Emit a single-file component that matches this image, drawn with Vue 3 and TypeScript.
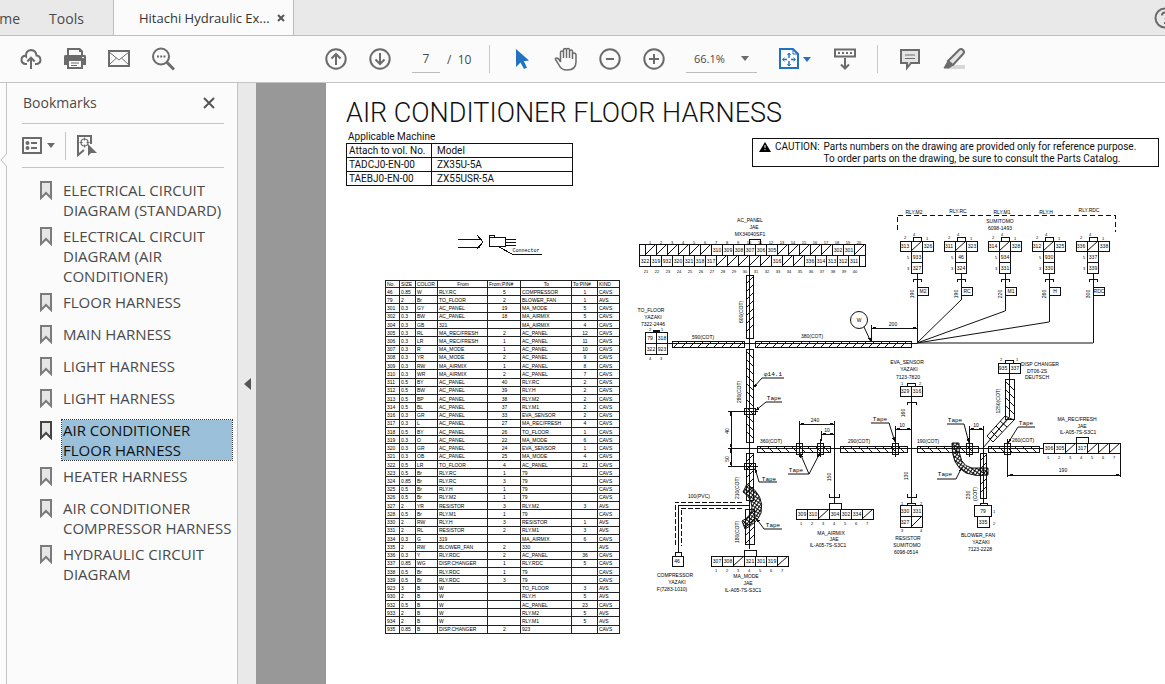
<script setup lang="ts">
import { ref } from 'vue'

interface Bookmark { label: string; selected?: boolean }
interface Tube { x: number; y: number; w: number; h: number; back?: boolean }
interface Label { t: string; x: number; y: number; kind?: string; turn?: boolean }
interface Strip { x: number; y: number; cells: string[] }
interface Relay {
  name: string; nx: number; ny: number; x: number; left: string; right: string
  top: string; bottom: string; length: string; tag: string; bend: number
}

const page = ref('7')
const zoom = ref('66.1%')

const bookmarks: Bookmark[] = [
  { label: 'ELECTRICAL CIRCUIT DIAGRAM (STANDARD)' },
  { label: 'ELECTRICAL CIRCUIT DIAGRAM (AIR CONDITIONER)' },
  { label: 'FLOOR HARNESS' },
  { label: 'MAIN HARNESS' },
  { label: 'LIGHT HARNESS' },
  { label: 'LIGHT HARNESS' },
  { label: 'AIR CONDITIONER FLOOR HARNESS', selected: true },
  { label: 'HEATER HARNESS' },
  { label: 'AIR CONDITIONER COMPRESSOR HARNESS' },
  { label: 'HYDRAULIC CIRCUIT DIAGRAM' },
]

const wireHead = ['No.', 'SIZE', 'COLOR', 'From', 'From:PIN#', 'To', 'To:PIN#', 'KIND']
const wires: string[][] = `46|0.85|W|RLY.RC|5|COMPRESSOR|1|CAVS
79|2|Br|TO_FLOOR|2|BLOWER_FAN|1|AVS
301|0.3|GY|AC_PANEL|19|MA_MODE|5|CAVS
302|0.3|BW|AC_PANEL|18|MA_AIRMIX|5|CAVS
304|0.3|GB|321||MA_AIRMIX|4|CAVS
305|0.3|RL|MA_REC/FRESH|2|AC_PANEL|12|CAVS
306|0.3|LR|MA_REC/FRESH|1|AC_PANEL|11|CAVS
307|0.3|R|MA_MODE|1|AC_PANEL|10|CAVS
308|0.3|YR|MA_MODE|2|AC_PANEL|9|CAVS
309|0.3|RW|MA_AIRMIX|1|AC_PANEL|8|CAVS
310|0.3|WR|MA_AIRMIX|2|AC_PANEL|7|CAVS
311|0.5|BY|AC_PANEL|40|RLY.RC|2|CAVS
312|0.5|BW|AC_PANEL|39|RLY.H|2|CAVS
313|0.5|BP|AC_PANEL|38|RLY.M2|2|CAVS
314|0.5|BL|AC_PANEL|37|RLY.M1|2|CAVS
316|0.3|GR|AC_PANEL|33|EVA_SENSOR|2|CAVS
317|0.3|L|AC_PANEL|27|MA_REC/FRESH|4|CAVS
318|0.5|BY|AC_PANEL|26|TO_FLOOR|1|CAVS
319|0.3|O|AC_PANEL|22|MA_MODE|6|CAVS
320|0.3|GR|AC_PANEL|24|EVA_SENSOR|1|CAVS
321|0.3|OB|AC_PANEL|25|MA_MODE|4|CAVS
322|0.5|LR|TO_FLOOR|4|AC_PANEL|21|CAVS
323|0.5|Br|RLY.RC|1|79||CAVS
324|0.85|Br|RLY.RC|3|79||CAVS
325|0.5|Br|RLY.H|1|79||CAVS
326|0.5|Br|RLY.M2|1|79||CAVS
327|2|YR|RESISTOR|3|RLY.M2|3|AVS
328|0.5|Br|RLY.M1|1|79||CAVS
330|2|RW|RLY.H|3|RESISTOR|1|AVS
331|2|RL|RESISTOR|2|RLY.M1|3|AVS
334|0.3|G|319||MA_AIRMIX|6|CAVS
335|2|RW|BLOWER_FAN|2|330||AVS
336|0.3|Y|RLY.RDC|2|AC_PANEL|36|CAVS
337|0.85|WG|DISP.CHANGER|1|RLY.RDC|5|CAVS
338|0.5|Br|RLY.RDC|1|79||CAVS
339|0.5|Br|RLY.RDC|3|79||CAVS
923|3|B|W||TO_FLOOR|3|AVS
930|2|B|W||RLY.H|5|AVS
932|0.5|B|W||AC_PANEL|23|CAVS
933|2|B|W||RLY.M2|5|AVS
934|2|B|W||RLY.M1|5|AVS
935|0.85|B|DISP.CHANGER|2|923||CAVS`.split('\n').map((row) => row.split('|'))

const panelTop = '/ / / / / / 310 309 308 307 306 305 / / / / / 302 301 /'.split(' ')
const panelBottom = '322 319 932 320 321 318 317 / / / / / 316 / / 336 314 313 312 311'.split(' ')

const relays: Relay[] = [
  { name: 'RLY.M2', nx: 914, ny: 212, x: 917, left: '313', right: '326', top: '933', bottom: '327', length: '190', tag: 'M2', bend: 343 },
  { name: 'RLY.RC', nx: 958, ny: 211, x: 961, left: '311', right: '323', top: '46', bottom: '324', length: '190', tag: 'RC', bend: 300 },
  { name: 'RLY.M1', nx: 1002, ny: 212, x: 1005, left: '314', right: '328', top: '934', bottom: '331', length: '220', tag: 'M1', bend: 311 },
  { name: 'RLY.H', nx: 1046, ny: 212, x: 1049, left: '312', right: '325', top: '930', bottom: '330', length: '260', tag: 'H', bend: 322 },
  { name: 'RLY.RDC', nx: 1089, ny: 210, x: 1093, left: '336', right: '338', top: '337', bottom: '339', length: '300', tag: 'RDC', bend: 343 },
]

const strips: Strip[] = [
  { x: 1043, y: 443, cells: ['306', '305', '/', '317', '/', '/', '/'] },
  { x: 796, y: 509, cells: ['309', '310', '/', '304', '302', '334', '/'] },
  { x: 711, y: 556, cells: ['307', '308', '/', '321', '301', '319', '/'] },
]

const tubes: Tube[] = [
  { x: 746, y: 275, w: 7, h: 63 },
  { x: 672, y: 341, w: 72, h: 6 },
  { x: 755, y: 341, w: 156, h: 6 },
  { x: 746, y: 349, w: 7, h: 93, back: true },
  { x: 746, y: 453, w: 7, h: 47 },
  { x: 745, y: 509, w: 9, h: 35 },
  { x: 757, y: 446, w: 73, h: 6, back: true },
  { x: 840, y: 446, w: 67, h: 6, back: true },
  { x: 917, y: 446, w: 61, h: 6, back: true },
  { x: 988, y: 446, w: 51, h: 6, back: true },
  { x: 980, y: 453, w: 6, h: 45 },
  { x: 1005, y: 379, w: 9, h: 40, back: true },
]

function hatch(t: Tube): string {
  const upright = t.h > t.w
  const d = Math.min(t.w, t.h)
  const span = Math.max(t.w, t.h)
  let path = ''
  for (let s = 2; s + d <= span; s += 8) {
    const x = upright ? t.x : t.x + s
    const y = upright ? t.y + s : t.y
    path += t.back ? `M${x} ${y}l${d} ${d}` : `M${x} ${y + d}l${d} ${-d}`
  }
  return path
}

const clampsAcross = [799, 820, 895, 969, 1007]
const clampsUpright = [411, 466]

const leaders = [
  'M784 378H762L753 388', 'M782 402H766L755 411', 'M777 482H759L755 468', 'M782 529H764L756 518',
  'M788 474H809L800 453', 'M809 474L820 453', 'M871 423H889L895 442', 'M947 424H964L969 443',
  'M1035 427H1018L1008 443', 'M937 479H956L962 467', 'M864 327L871 342',
]

const dims = [
  'M731 411V448', 'M731 448V466', 'M799 424H834', 'M821 434H834', 'M895 429H911',
  'M969 429H983', 'M1008 475H1120', 'M871 328H917',
]

const labels: Label[] = [
  { t: 'AC_PANEL', x: 750, y: 220 }, { t: 'JAE', x: 754, y: 227 }, { t: 'MX34040SF1', x: 750, y: 234 },
  { t: 'SUMITOMO', x: 1000, y: 221 }, { t: '6098-1493', x: 1000, y: 228 },
  { t: 'TO_FLOOR', x: 651, y: 310 }, { t: 'YAZAKI', x: 653, y: 317 }, { t: '7322-2446', x: 653, y: 324 },
  { t: 'EVA_SENSOR', x: 907, y: 362 }, { t: 'YAZAKI', x: 909, y: 369 }, { t: '7123-7820', x: 908, y: 377 },
  { t: 'DISP CHANGER', x: 1040, y: 364 }, { t: 'DT06-2S', x: 1037, y: 371 }, { t: 'DEUTSCH', x: 1037, y: 377 },
  { t: 'MA_REC/FRESH', x: 1077, y: 419 }, { t: 'JAE', x: 1082, y: 426 }, { t: 'IL-A05-7S-S3C1', x: 1078, y: 432 },
  { t: 'MA_AIRMIX', x: 831, y: 533 }, { t: 'JAE', x: 834, y: 539 }, { t: 'IL-A05-7S-S3C1', x: 828, y: 545 },
  { t: 'MA_MODE', x: 746, y: 576 }, { t: 'JAE', x: 748, y: 583 }, { t: 'IL-A05-7S-S3C1', x: 743, y: 590 },
  { t: 'COMPRESSOR', x: 675, y: 575 }, { t: 'YAZAKI', x: 677, y: 582 }, { t: 'F(7283-1010)', x: 672, y: 589 },
  { t: 'RESISTOR', x: 908, y: 538 }, { t: 'SUMITOMO', x: 907, y: 545 }, { t: '6098-0514', x: 906, y: 552 },
  { t: 'BLOWER_FAN', x: 978, y: 535 }, { t: 'YAZAKI', x: 981, y: 542 }, { t: '7123-2228', x: 980, y: 549 },
  { t: '590(COT)', x: 703, y: 337 }, { t: '380(COT)', x: 812, y: 336 }, { t: '100(PVC)', x: 699, y: 496 },
  { t: '360(COT)', x: 771, y: 441 }, { t: '290(COT)', x: 859, y: 441 }, { t: '190(COT)', x: 928, y: 441 }, { t: '260(COT)', x: 1023, y: 440 },
  { t: '600(COT)', x: 741, y: 312, turn: true }, { t: '280(COT)', x: 739, y: 392, turn: true },
  { t: '210(COT)', x: 737, y: 488, turn: true }, { t: '180(COT)', x: 737, y: 532, turn: true },
  { t: '1250(COT)', x: 998, y: 401, turn: true }, { t: '230', x: 968, y: 495, turn: true }, { t: '(COT)', x: 975, y: 494, turn: true },
  { t: '150', x: 829, y: 477, turn: true }, { t: '160', x: 903, y: 413, turn: true }, { t: '130', x: 906, y: 476, turn: true },
  { t: '40', x: 727, y: 431, turn: true }, { t: '50', x: 727, y: 459, turn: true },
  { t: '240', x: 815, y: 420 }, { t: '10', x: 827, y: 430 }, { t: '10', x: 902, y: 425 },
  { t: '10', x: 976, y: 425 }, { t: '190', x: 1063, y: 470 }, { t: '200', x: 893, y: 324 },
  { t: 'W', x: 859, y: 320 },
  { t: 'φ14.1', x: 773, y: 374, kind: 'tape' },
  { t: 'Tape', x: 774, y: 398, kind: 'tape' }, { t: 'Tape', x: 769, y: 479, kind: 'tape' }, { t: 'Tape', x: 773, y: 525, kind: 'tape' },
  { t: 'Tape', x: 796, y: 470, kind: 'tape' }, { t: 'Tape', x: 880, y: 419, kind: 'tape' }, { t: 'Tape', x: 955, y: 420, kind: 'tape' },
  { t: 'Tape', x: 1026, y: 423, kind: 'tape' }, { t: 'Tape', x: 945, y: 474, kind: 'tape' },
  { t: '79', x: 650, y: 338 }, { t: '318', x: 662, y: 338 }, { t: '322', x: 651, y: 349 }, { t: '923', x: 662, y: 349 },
  { t: '329', x: 905, y: 391 }, { t: '316', x: 917, y: 391 },
  { t: '935', x: 1003, y: 368 }, { t: '337', x: 1015, y: 368 },
  { t: '330', x: 905, y: 511 }, { t: '331', x: 917, y: 511 }, { t: '327', x: 905, y: 522 },
  { t: '79', x: 983, y: 511 }, { t: '335', x: 983, y: 522 }, { t: '46', x: 677, y: 561 },
  { t: '2', x: 650, y: 329, kind: 'pin' }, { t: '1', x: 662, y: 329, kind: 'pin' }, { t: '4', x: 650, y: 358, kind: 'pin' }, { t: '3', x: 661, y: 358, kind: 'pin' },
  { t: '1', x: 902, y: 383, kind: 'pin' }, { t: '2', x: 920, y: 383, kind: 'pin' }, { t: '2', x: 1001, y: 359, kind: 'pin' }, { t: '1', x: 1017, y: 359, kind: 'pin' },
  { t: '1', x: 902, y: 503, kind: 'pin' }, { t: '2', x: 921, y: 503, kind: 'pin' }, { t: '3', x: 902, y: 530, kind: 'pin' }, { t: '4', x: 921, y: 530, kind: 'pin' },
  { t: '1', x: 994, y: 511, kind: 'pin' }, { t: '2', x: 994, y: 523, kind: 'pin' },
]
</script>

<template>
  <div class="viewer">
    <nav class="tabs" aria-label="Documents">
      <button class="tab home">Home</button>
      <button class="tab tools">Tools</button>
      <div class="tab document">
        <span>Hitachi Hydraulic Ex...</span>
        <button class="close-tab" aria-label="Close tab">
          <svg width="8" height="8" viewBox="0 0 8 8"><path d="M1 1l6 6M7 1L1 7" stroke="#555" stroke-width="2" /></svg>
        </button>
      </div>
      <button class="help" aria-label="Help">
        <svg width="22" height="22" viewBox="0 0 22 22" class="line-icon"><circle cx="11" cy="11" r="9.5" /><path d="M8 8.5q0-3 3-3t3 3q0 1.500-3 4M11 15v2" /></svg>
      </button>
    </nav>

    <header class="toolbar">
      <button class="tool" aria-label="Upload">
        <svg width="24" height="24" viewBox="0 0 24 24" class="line-icon"><path d="M8 17H6.500A4.200 4.200 0 0 1 5.500 8.800Q6.500 9 7 9.400Q6.500 3.500 12 3q5 .3 5.500 5.500A4.300 4.300 0 0 1 18 17h-2" /><path d="M12 22V11M8.300 14.500L12 10.700l3.700 3.800" /></svg>
      </button>
      <button class="tool" aria-label="Print">
        <svg width="24" height="24" viewBox="0 0 24 24"><path d="M4 1h13l3 3v5H4z" fill="#6b6b6b" /><path d="M6 3h10v2h2v4H6z" fill="#fbfbfb" /><path d="M2 8h20q1 0 1 2v8h-3v4H4v-4H1v-8q0-2 1-2z" fill="#6b6b6b" /><path d="M6 14h12v6H6z" fill="#fbfbfb" /><path d="M8 16h8M8 18.500h6" stroke="#6b6b6b" /><path d="M19 10.500h2" stroke="#fbfbfb" /></svg>
      </button>
      <button class="tool" aria-label="Send by email">
        <svg width="24" height="24" viewBox="0 0 24 24" class="line-icon"><path d="M2 4h20v15H2z" /><path d="M2 5l10 8 10-8M2 18l7.500-7M22 18l-7.500-7" stroke-width="1" /></svg>
      </button>
      <button class="tool" aria-label="Find text">
        <svg width="24" height="24" viewBox="0 0 24 24" class="line-icon"><circle cx="10" cy="9.500" r="8" /><path d="M16 15.500l7 7" stroke-width="3" /><path d="M6 9.500h2M9.200 9.500h2M12.500 9.500h2" /></svg>
      </button>
      <button class="tool previous" aria-label="Previous page">
        <svg width="24" height="24" viewBox="0 0 24 24" class="line-icon"><circle cx="12" cy="12" r="9.700" /><path d="M12 18V7M7.500 11.500L12 7l4.500 4.500" /></svg>
      </button>
      <button class="tool" aria-label="Next page">
        <svg width="24" height="24" viewBox="0 0 24 24" class="line-icon"><circle cx="12" cy="12" r="9.700" /><path d="M12 6v11M7.500 12.500L12 17l4.500-4.500" /></svg>
      </button>
      <input v-model="page" class="page-number" type="text" aria-label="Page number">
      <span class="page-total">/&nbsp; 10</span>
      <span class="divider"></span>
      <button class="tool" aria-label="Select">
        <svg width="24" height="24" viewBox="0 0 24 24"><path d="M6 2v18l4.500-4.500 3.500 6.500 3-1.500-3.200-6.300L19 13.500z" fill="#2272c3" /></svg>
      </button>
      <button class="tool" aria-label="Hand">
        <svg width="24" height="24" viewBox="0 0 24 24" class="line-icon thin"><path d="M6.500 15V5.500q0-1.500 1.500-1.500t1.500 1.500V11V3q0-1.500 1.500-1.500T12.500 3v8V3q0-1.500 1.500-1.500T15.500 3v8V4.500q0-1.500 1.500-1.500t1.500 1.500V12V7.500q0-1.500 1.500-1.500T22 7.500V15q0 8-9 8Q7 23 5 18L1.500 12.500Q1 11 2.500 11q2-.2 4 4z" /></svg>
      </button>
      <button class="tool" aria-label="Zoom out">
        <svg width="24" height="24" viewBox="0 0 24 24" class="line-icon"><circle cx="12" cy="12" r="9.700" /><path d="M8 12h8" /></svg>
      </button>
      <button class="tool" aria-label="Zoom in">
        <svg width="24" height="24" viewBox="0 0 24 24" class="line-icon"><circle cx="12" cy="12" r="9.700" /><path d="M7 12h10M12 7v10" /></svg>
      </button>
      <label class="zoom">
        <select v-model="zoom" aria-label="Zoom level">
          <option>66.1%</option>
          <option>100%</option>
        </select>
        <svg width="8" height="5" viewBox="0 0 8 5"><path d="M0 0h8L4 5z" fill="#6b6b6b" /></svg>
      </label>
      <button class="tool fit" aria-label="Fit page">
        <svg width="22" height="24" viewBox="0 0 22 24" fill="none" stroke="#2272c3" stroke-width="2"><path d="M2 2h13l5 5v14H2z" /><path d="M15 2v5h5" stroke-width="1" /><path d="M11 6v5M11 14v5M5 12.500h4M13 12.500h4" stroke-width="1.500" /><path d="M9.300 8L11 6l1.700 2M9.300 17l1.700 2 1.700-2M6.500 10.800l-2 1.700 2 1.700M15.500 10.800l2 1.700-2 1.700" stroke-width="1" /></svg>
        <svg width="8" height="5" viewBox="0 0 8 5"><path d="M0 0h8L4 5z" fill="#2272c3" /></svg>
      </button>
      <button class="tool scroll" aria-label="Page scrolling">
        <svg width="24" height="24" viewBox="0 0 24 24" class="line-icon"><path d="M2 2.500h20v7H2z" /><path d="M5 6h2M9 6h2M13 6h2M17 6h2M12 11v10M8 17.500l4 4 4-4" /></svg>
      </button>
      <span class="divider second"></span>
      <button class="tool" aria-label="Comment">
        <svg width="24" height="24" viewBox="0 0 24 24" class="line-icon"><path d="M3 3h18v13h-8l-4 5v-5H3z" fill="#e4e4e4" /><path d="M7 8h10M7 11.500h10" stroke-width="1" /></svg>
      </button>
      <button class="tool" aria-label="Highlight">
        <svg width="24" height="24" viewBox="0 0 24 24" class="line-icon"><path d="M8 18h15v4H5z" fill="#d8d8d8" stroke="none" /><path d="M6 14L17 3q2-2 4 0t0 4L11 18z" fill="#e4e4e4" /><path d="M6 14l5 4-4 3H2z" fill="#6b6b6b" stroke-width="1" /></svg>
      </button>
    </header>

    <main class="workspace">
      <div class="rail">
        <svg width="7" height="14" viewBox="0 0 7 14"><path d="M7 0L1 7l6 7" fill="#fbfbfb" stroke="#bbb" /></svg>
      </div>
      <aside class="panel">
        <div class="panel-head">
          <h2>Bookmarks</h2>
          <button aria-label="Close bookmarks"><svg width="14" height="14" viewBox="0 0 14 14"><path d="M2 2l10 10M12 2L2 12" stroke="#555" stroke-width="2" /></svg></button>
        </div>
        <div class="panel-tools">
          <button class="options" aria-label="Options">
            <svg width="20" height="18" viewBox="0 0 20 18" class="line-icon"><path d="M1 1h18v15H1z" /><path d="M9 6h6M9 11h6" /><circle cx="5.500" cy="6" r="1" /><circle cx="5.500" cy="11" r="1" /></svg>
            <svg width="8" height="5" viewBox="0 0 8 5"><path d="M0 0h8L4 5z" fill="#6b6b6b" /></svg>
          </button>
          <button class="locate" aria-label="Find current bookmark">
            <svg width="22" height="24" viewBox="0 0 22 24" class="line-icon"><path d="M15 10V2H2v19l6-5" /><circle cx="8.500" cy="8.500" r="3.500" stroke-width="1.200" /><path d="M8.500 3.500v3M8.500 10.500v3M3.500 8.500h3M10.500 8.500h3" stroke-width="1" /><path d="M12 10v12l3-3h6z" fill="#6b6b6b" stroke="none" /></svg>
          </button>
        </div>
        <ul class="bookmarks">
          <li v-for="(b, i) in bookmarks" :key="i">
            <svg width="12" height="20" viewBox="0 0 12 20"><path d="M1 2h10v16l-5-5-5 5z" fill="#e6e6e6" :stroke="b.selected ? '#444' : '#7b7b7b'" stroke-width="2" /></svg>
            <a href="#" :class="{ selected: b.selected }">{{ b.label }}</a>
          </li>
        </ul>
      </aside>
      <button class="splitter" aria-label="Collapse panel">
        <svg width="7" height="12" viewBox="0 0 7 12"><path d="M7 0v12L0 6z" fill="#555" /></svg>
      </button>

      <article class="sheet">
        <h1>AIR CONDITIONER FLOOR HARNESS</h1>
        <div class="sheet-head">
          <table class="machines">
            <caption>Applicable Machine</caption>
            <thead><tr><th>Attach to vol. No.</th><th>Model</th></tr></thead>
            <tbody>
              <tr><td>TADCJ0-EN-00</td><td>ZX35U-5A</td></tr>
              <tr><td>TAEBJ0-EN-00</td><td>ZX55USR-5A</td></tr>
            </tbody>
          </table>
          <div class="caution">
            <svg width="12" height="10" viewBox="0 0 12 10"><path d="M6 0l6 10H0z" /><path d="M6 3v3M6 7v1" stroke="#fff" /></svg>
            <strong>CAUTION:</strong>
            <p>Parts numbers on the drawing are provided only for reference purpose.<br>To order parts on the drawing, be sure to consult the Parts Catalog.</p>
          </div>
        </div>

        <div class="sheet-body">
          <div class="wire-column">
            <svg class="drawing legend" viewBox="385 195 234 85">
              <path d="M458 239h22M458 247h22M477 235l6 7-6 7" />
              <path d="M489 246v-11h5v2h11v9zM489 237h5M505 239h11M505 242h11M505 245h11" />
              <path d="M499 247l13 7h30" />
              <text x="526" y="251" class="tape">Connector</text>
            </svg>
            <table class="wires">
              <colgroup><col v-for="n in 8" :key="n" :class="'c' + n"></colgroup>
              <thead><tr><th v-for="h in wireHead" :key="h">{{ h }}</th></tr></thead>
              <tbody>
                <tr v-for="row in wires" :key="row[0]"><td v-for="(cell, i) in row" :key="i">{{ cell }}</td></tr>
              </tbody>
            </table>
          </div>

          <svg class="drawing harness" viewBox="630 195 535 410">
            <defs>
              <marker id="tip" viewBox="0 0 6 4" refX="6" refY="2" markerWidth="5" markerHeight="3" orient="auto-start-reverse"><path d="M0 0l6 2-6 2z" fill="#111" stroke="none" /></marker>
              <pattern id="mesh" width="3" height="3" patternUnits="userSpaceOnUse" patternTransform="rotate(35)"><path d="M0 0h3M0 0v3" stroke="#111" stroke-width="1" /></pattern>
            </defs>

            <!-- wires -->
            <path d="M667 343H917M749 266V549M728 448H1043M834 421V503M911 396V503M983 426V503M1009 373V417" />
            <path class="smooth" d="M1009 417L983 448" />
            <path d="M749 505H678V552" />
            <path d="M742 502H675V546M742 508H681V546" stroke-dasharray="5 2" />
            <path d="M897 230V215H1115V232" stroke-dasharray="5 3" />

            <!-- protective tubes -->
            <g v-for="(t, i) in tubes" :key="'t' + i">
              <rect :x="t.x" :y="t.y" :width="t.w" :height="t.h" />
              <path class="smooth" :d="hatch(t)" />
            </g>
            <path class="smooth" d="M1005 416L1014 420L993 442L987 436zM1000 421l7 6M996 426l6 6M991 431l6 6M1009 418L990 439" />
            <path class="smooth" d="M747 484Q765 495 761 513Q757 523 745 529L742 521Q751 517 752 507Q751 497 743 492z" fill="url(#mesh)" />
            <path class="smooth" d="M952 443H959Q958 466 972 468H988V475Q976 477 966 473Q951 465 952 443z" fill="url(#mesh)" />
            <g v-for="x in clampsAcross" :key="'a' + x">
              <rect :x="x - 3" y="443" width="6" height="11" /><path :d="`M${x} 439v18`" />
            </g>
            <g v-for="y in clampsUpright" :key="'u' + y">
              <rect x="744" :y="y - 3" width="11" height="6" /><path :d="`M728 ${y}h30`" />
            </g>

            <!-- dimensions -->
            <path v-for="d in dims" :key="d" :d="d" marker-start="url(#tip)" marker-end="url(#tip)" />
            <path d="M799 421v20M821 431v10M895 426v14M969 426v14M1007 456v21M1120 454v23M871 325v17" />
            <path v-for="d in leaders" :key="d" class="smooth" :d="d" marker-end="url(#tip)" />
            <circle class="smooth" cx="859" cy="320" r="8.500" />

            <!-- AC panel connector -->
            <path d="M639 244H865V266H639zM639 255H865M645 244v11M859 255v11M749 244v-5h11v5" />
            <g v-for="(c, i) in panelTop" :key="'p' + i">
              <path :d="`M${645 + i * 11} 244v11`" />
              <path v-if="c === '/'" class="smooth" :d="`M${645 + i * 11} 255l11 -11`" />
              <text v-else :x="651 + i * 11" y="250">{{ c }}</text>
              <text class="pin" :x="650 + i * 11" y="242">{{ i + 1 }}</text>
            </g>
            <g v-for="(c, i) in panelBottom" :key="'q' + i">
              <path :d="`M${639 + i * 11} 255v11`" />
              <path v-if="c === '/'" class="smooth" :d="`M${639 + i * 11} 266l11 -11`" />
              <text v-else :x="645 + i * 11" y="261">{{ c }}</text>
              <text class="pin" :x="646 + i * 11" y="271">{{ i + 21 }}</text>
            </g>

            <!-- relays -->
            <g v-for="r in relays" :key="r.name">
              <text :x="r.nx" :y="r.ny">{{ r.name }}</text>
              <rect :x="r.x - 17" y="241" width="33" height="10" />
              <rect :x="r.x - 6" y="241" width="11" height="32" />
              <path :d="`M${r.x - 6} 251h11M${r.x - 6} 262h11M${r.x - 4} 241v-4h8v4M${r.x - 4} 282v-3h8v3`" />
              <path class="smooth" :d="`M${r.x - 6} 251l11 -10`" />
              <text :x="r.x - 12" y="246">{{ r.left }}</text>
              <text :x="r.x + 11" y="246">{{ r.right }}</text>
              <text :x="r.x" y="257">{{ r.top }}</text>
              <text :x="r.x" y="268">{{ r.bottom }}</text>
              <text class="pin" :x="r.x - 12" y="237">2</text>
              <text class="pin" :x="r.x - 3" y="234">4</text>
              <text class="pin" :x="r.x + 10" y="238">1</text>
              <text class="pin" :x="r.x - 9" y="257">5</text>
              <text class="pin" :x="r.x - 9" y="268">3</text>
              <path :d="`M${r.x} 273V${r.bend}`" />
              <path class="smooth" :d="`M${r.x} ${r.bend}L917 343`" />
              <rect :x="r.x" y="287" width="11" height="8" />
              <text :x="r.x + 6" y="291">{{ r.tag }}</text>
              <text :transform="`translate(${r.x - 5} 294) rotate(-90)`">{{ r.length }}</text>
            </g>

            <!-- seven-way connectors -->
            <g v-for="s in strips" :key="'s' + s.x">
              <rect :x="s.x" :y="s.y" width="77" height="10" />
              <path :d="`M${s.x + 33} ${s.y}v-6h12v6`" />
              <g v-for="(c, i) in s.cells" :key="i">
                <path :d="`M${s.x + i * 11} ${s.y}v10`" />
                <path v-if="c === '/'" class="smooth" :d="`M${s.x + i * 11} ${s.y + 10}l11 -10`" />
                <text v-else :x="s.x + 6 + i * 11" :y="s.y + 5">{{ c }}</text>
                <text class="pin" :x="s.x + 5 + i * 11" :y="s.y + 14">{{ i + 1 }}</text>
              </g>
            </g>

            <!-- small connectors -->
            <path d="M645 332h22v22h-22zM645 343h22M656 332v22" />
            <rect x="653" y="330" width="6" height="2" fill="#111" />
            <path d="M900 386h22v10h-22zM911 386v10M907 386v-3h8v3M907 405v-3h9v3" />
            <path d="M998 363h22v10h-22zM1009 363v10M1005 363v-3h8v3" />
            <path d="M900 505h22v22h-22zM900 516h22M911 505v22M907 505v-2h8v2M907 494v3h9v-3M911 527l11-11M829 494v3h10v-3" />
            <path d="M974 505h17v11h-17zM977 516h12v11h-12zM980 505v-2h7v2" />
            <path d="M672 556h11v10h-11zM675 556v-4h6v4" />

            <g v-for="(l, i) in labels" :key="'l' + i">
              <text v-if="l.turn" :class="l.kind" :transform="`translate(${l.x} ${l.y}) rotate(-90)`">{{ l.t }}</text>
              <text v-else :class="l.kind" :x="l.x" :y="l.y">{{ l.t }}</text>
            </g>
          </svg>
        </div>
      </article>
    </main>
  </div>
</template>

<style>
body { overflow: hidden; }
</style>

<style scoped>
* { box-sizing: border-box; }
.viewer { height: 100vh; display: flex; flex-direction: column; font: 14px "Open Sans", "Noto Sans", sans-serif; color: #4a4a4a; background: #fbfbfb; }
button { border: 0; padding: 0; background: none; font: inherit; color: inherit; display: flex; align-items: center; justify-content: center; flex: none; }
.line-icon { fill: none; stroke: #6b6b6b; stroke-width: 2; }
.line-icon.thin { stroke-width: 1.5; }

.tabs { height: 36px; flex: none; display: flex; background: #e9e9e9; border-bottom: 1px solid #bdbdbd; overflow: hidden; }
.tab { height: 36px; }
.home { width: 40px; margin-left: -20px; justify-content: flex-end; }
.tools { width: 93px; }
.document { display: flex; align-items: center; justify-content: space-between; width: 181px; padding: 0 8px 0 25px; background: #fbfbfb; border: solid #bdbdbd; border-width: 0 1px; font-size: 13px; color: #333; white-space: nowrap; }
.help { margin: 0 -11px 0 auto; }

.toolbar { height: 47px; flex: none; display: flex; align-items: center; padding-left: 9px; border-bottom: 1px solid #c4c4c4; background: #fbfbfb; font-size: 12px; }
.tool { width: 44px; height: 44px; }
.previous { margin-left: 129px; }
.page-number { width: 28px; height: 28px; margin-left: 10px; padding: 0; border: 0; border-bottom: 1px solid #bbb; background: none; font: inherit; color: inherit; text-align: center; }
.page-total { width: 42px; margin-left: 7px; }
.divider { width: 1px; height: 28px; margin-right: 10px; background: #c8c8c8; }
.divider.second { margin-left: 10px; }
.zoom { width: 71px; height: 28px; margin-left: 10px; display: flex; align-items: center; padding-right: 8px; border-bottom: 1px solid #bbb; font-size: 11px; }
.zoom select { flex: 1; min-width: 0; appearance: none; border: 0; padding: 0 0 0 8px; background: none; font: inherit; color: inherit; }
.fit { width: 36px; margin-left: 19px; gap: 3px; }
.scroll { margin-left: 11px; }

.workspace { flex: 1; min-height: 0; display: flex; background: #989898; }
.rail { width: 7px; flex: none; padding-top: 70px; border-right: 1px solid #c4c4c4; background: #fbfbfb; }
.rail svg { display: block; }
.panel { width: 231px; flex: none; padding-right: 5px; border-right: 1px solid #c4c4c4; background: #fbfbfb; }
.panel-head { height: 41px; margin: 0 8px 0 15px; padding: 0 8px 0 1px; display: flex; align-items: center; justify-content: space-between; border-bottom: 1px solid #c4c4c4; }
.panel-head h2 { margin: 0; padding-bottom: 2px; font-size: 14px; font-weight: 400; }
.panel-tools { height: 44px; margin: 0 8px 0 15px; display: flex; align-items: center; border-bottom: 1px solid #c4c4c4; }
.options { width: 44px; height: 28px; gap: 5px; border-right: 1px solid #c4c4c4; padding-right: 10px; }
.locate { margin-left: 10px; }
.bookmarks { list-style: none; margin: 0; padding: 12px 0 0 33px; display: flex; flex-direction: column; gap: 6px; font-size: 15px; }
.bookmarks li { min-height: 26px; display: flex; align-items: flex-start; gap: 10px; }
.bookmarks svg { flex: none; }
.bookmarks a { flex: 1; padding-left: 1px; line-height: 20px; color: inherit; text-decoration: none; }
.bookmarks a.selected { background: #9ac0da; color: #111; outline: 1px dotted #333; }
.splitter { width: 18px; height: auto; background: #e9e9e9; justify-content: flex-end; padding-right: 5px; }

.sheet { flex: 1; min-width: 0; margin-left: 70px; overflow: hidden; background: #fff; color: #111; font: 10px/12px Roboto, "Liberation Sans", sans-serif; }
.sheet h1 { margin: 14px 0 0 20px; font-size: 27px; line-height: 32px; font-weight: 300; white-space: nowrap; }
.sheet-head { display: flex; justify-content: space-between; align-items: flex-start; margin: 2px 6px 0 20px; }
.machines { width: 227px; flex: none; border-collapse: collapse; table-layout: fixed; }
.machines caption { text-align: left; padding-left: 2px; white-space: nowrap; }
.machines th, .machines td { height: 14px; padding: 0 0 0 2px; border: 1px solid #111; text-align: left; font-weight: 400; white-space: nowrap; }
.machines th:first-child { width: 85px; }
.machines th + th, .machines td + td { padding-left: 5px; }
.caution { display: flex; gap: 4px; margin-top: 7px; width: 407px; padding: 2px 6px 1px; border: 1px solid #111; white-space: nowrap; }
.caution svg { flex: none; margin-top: 1px; }
.caution strong { font-weight: 400; }
.caution p { margin: 0; }

.sheet-body { display: flex; align-items: flex-start; gap: 11px; margin: 9px 0 0 59px; }
.wire-column { width: 234px; flex: none; }
.drawing { display: block; fill: none; stroke: #111; stroke-width: 1; shape-rendering: crispEdges; }
.legend { width: 100%; }
.harness { flex: 1; min-width: 0; }
.drawing .smooth { shape-rendering: auto; }
.drawing text { fill: #000; stroke: none; font: 5px "Liberation Sans", sans-serif; text-anchor: middle; dominant-baseline: central; }
.drawing text.pin { font-size: 4px; }
.drawing text.tape { font: 6px "Liberation Mono", monospace; }
.legend text.tape { font-size: 5px; }

.wires { width: 234px; height: 354px; border-collapse: collapse; table-layout: fixed; font: 5px/6px "Liberation Sans", sans-serif; color: #000; }
.wires th, .wires td { padding: 0 0 0 1px; border: 1px solid #222; font-weight: 400; text-align: left; white-space: nowrap; overflow: hidden; }
.wires th:nth-child(4), .wires th:nth-child(6), .wires td:nth-child(5), .wires td:nth-child(7) { text-align: center; }
.c1 { width: 14px; }
.c2 { width: 16px; }
.c3 { width: 22px; }
.c4 { width: 50px; }
.c5 { width: 33px; }
.c6 { width: 51px; }
.c7 { width: 26px; }
.c8 { width: 22px; }
</style>
